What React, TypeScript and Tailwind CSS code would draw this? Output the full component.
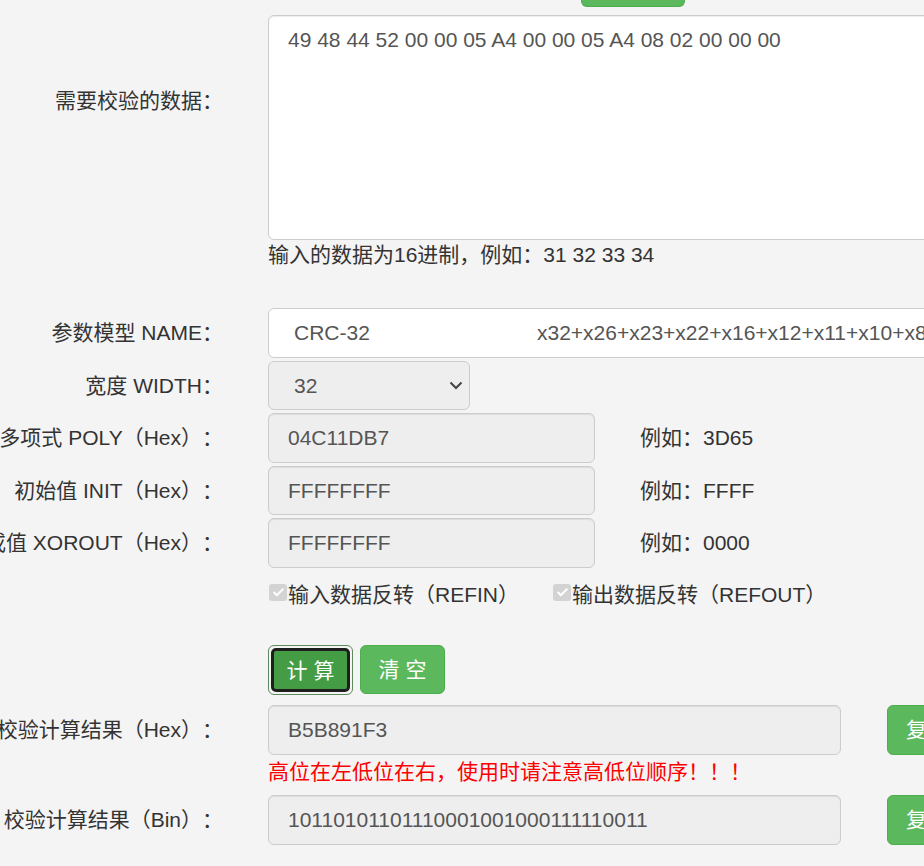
import { Check } from 'lucide-react';

const font = "font-['Liberation_Sans','Noto_Sans_CJK_SC',sans-serif]";

function Label({ text, className = '' }: { text: string; className?: string }) {
  // right aligned; long labels run off the left edge like in the original page
  return (
    <div className={`w-[268px] shrink-0 pr-[45px] flex justify-end whitespace-nowrap ${className}`}>
      <span className="shrink-0">{text}</span>
    </div>
  );
}

function ReadOnlyBox({ value, width, height = 'h-[50px]' }: { value: string; width: string; height?: string }) {
  return (
    <div
      className={`${width} ${height} shrink-0 flex items-center pl-[19px] bg-[#eeeeee] border border-[#cccccc] rounded-[6px] text-[#555555] shadow-[inset_0_1px_1px_rgba(0,0,0,0.075)]`}
    >
      {value}
    </div>
  );
}

function CopyButton() {
  return (
    <button className="ml-[46px] w-[80px] h-[50px] shrink-0 flex items-center pl-[18px] bg-[#5cb85c] border border-[#4cae4c] rounded-[6px] text-white">
      复制
    </button>
  );
}

function Checkbox() {
  return (
    <span className="mt-[4px] w-[18px] h-[17px] shrink-0 rounded-[3px] bg-[#d3d3d3] flex items-center justify-center">
      <Check size={13} strokeWidth={3.5} color="#ffffff" />
    </span>
  );
}

export default function App() {
  return (
    <div
      className={`w-[924px] h-[866px] overflow-hidden bg-[#f4f4f4] text-[21px] leading-[30px] text-[#333333] [text-spacing-trim:space-all] ${font}`}
    >
      {/* bottom edge of the button above */}
      <div className="h-[15px]">
        <div className="ml-[581px] w-[104px] h-[7px] bg-[#5cb85c] border border-t-0 border-[#4cae4c] rounded-b-[6px]" />
      </div>

      {/* data to check */}
      <div className="flex w-[924px]">
        <Label text="需要校验的数据：" className="pt-[71px]" />
        <div className="w-[700px] shrink-0">
          <textarea
            readOnly
            defaultValue="49 48 44 52 00 00 05 A4 00 00 05 A4 08 02 00 00 00"
            className="block w-[700px] h-[225px] resize-none bg-white border border-[#cccccc] rounded-[6px] px-[19px] py-[9px] text-[#555555] leading-[30px] outline-none shadow-[inset_0_1px_1px_rgba(0,0,0,0.075)]"
          />
          <div className="whitespace-nowrap">输入的数据为16进制，例如：31 32 33 34</div>
        </div>
      </div>

      {/* model name */}
      <div className="flex items-center mt-[38px] w-[924px]">
        <Label text="参数模型 NAME：" />
        <div className="w-[720px] h-[50px] shrink-0 flex items-center pl-[25px] bg-white border border-[#cccccc] rounded-[6px] text-[#555555] whitespace-nowrap overflow-hidden">
          <span className="w-[243px] shrink-0">CRC-32</span>
          <span>x32+x26+x23+x22+x16+x12+x11+x10+x8+x7+x5+x4+x2+x+1</span>
        </div>
      </div>

      {/* width */}
      <div className="flex items-center mt-[3px]">
        <Label text="宽度 WIDTH：" />
        <div className="w-[202px] h-[49px] shrink-0 flex items-center justify-between pl-[25px] pr-[6px] bg-[#eeeeee] border border-[#cccccc] rounded-[6px] text-[#555555]">
          <span>32</span>
          <svg width="14" height="9" viewBox="0 0 14 9" fill="none">
            <path d="M1.5 1.5 L7 7 L12.5 1.5" stroke="#444444" strokeWidth="2" />
          </svg>
        </div>
      </div>

      <div className="flex items-center mt-[3px]">
        <Label text="多项式 POLY（Hex）：" />
        <ReadOnlyBox value="04C11DB7" width="w-[327px]" />
        <span className="ml-[45px] whitespace-nowrap">例如：3D65</span>
      </div>

      <div className="flex items-center mt-[3px]">
        <Label text="初始值 INIT（Hex）：" />
        <ReadOnlyBox value="FFFFFFFF" width="w-[327px]" height="h-[49px]" />
        <span className="ml-[45px] whitespace-nowrap">例如：FFFF</span>
      </div>

      <div className="flex items-center mt-[3px]">
        <Label text="结果异或值 XOROUT（Hex）：" />
        <ReadOnlyBox value="FFFFFFFF" width="w-[327px]" />
        <span className="ml-[45px] whitespace-nowrap">例如：0000</span>
      </div>

      {/* reflect options */}
      <div className="flex mt-[12px] whitespace-nowrap">
        <div className="w-[269px] shrink-0" />
        <Checkbox />
        <span className="ml-[1px]">输入数据反转（REFIN）</span>
        <span className="ml-[34px]" />
        <Checkbox />
        <span className="ml-[1px]">输出数据反转（REFOUT）</span>
      </div>

      {/* actions */}
      <div className="flex mt-[35px]">
        <div className="w-[268px] shrink-0" />
        <div className="w-[85px] h-[50px] shrink-0 p-[2px] border border-[#5b8a5b] rounded-[6px] bg-[#f4f4f4]">
          <button className="w-full h-full border-[3px] border-[#1e1e1e] rounded-[5px] bg-[#449d44] text-white leading-none">
            计 算
          </button>
        </div>
        <button className="ml-[7px] w-[85px] h-[49px] shrink-0 bg-[#5cb85c] border border-[#4cae4c] rounded-[6px] text-white leading-none">
          清 空
        </button>
      </div>

      {/* results */}
      <div className="flex items-center mt-[10px]">
        <Label text="校验计算结果（Hex）：" />
        <ReadOnlyBox value="B5B891F3" width="w-[573px]" />
        <CopyButton />
      </div>
      <div className="flex mt-[2px]">
        <div className="w-[268px] shrink-0" />
        <div className="text-[#ff0000] whitespace-nowrap">高位在左低位在右，使用时请注意高低位顺序！！！</div>
      </div>

      <div className="flex items-center mt-[8px]">
        <Label text="校验计算结果（Bin）：" />
        <ReadOnlyBox value="10110101101110001001000111110011" width="w-[573px]" />
        <CopyButton />
      </div>
    </div>
  );
}
